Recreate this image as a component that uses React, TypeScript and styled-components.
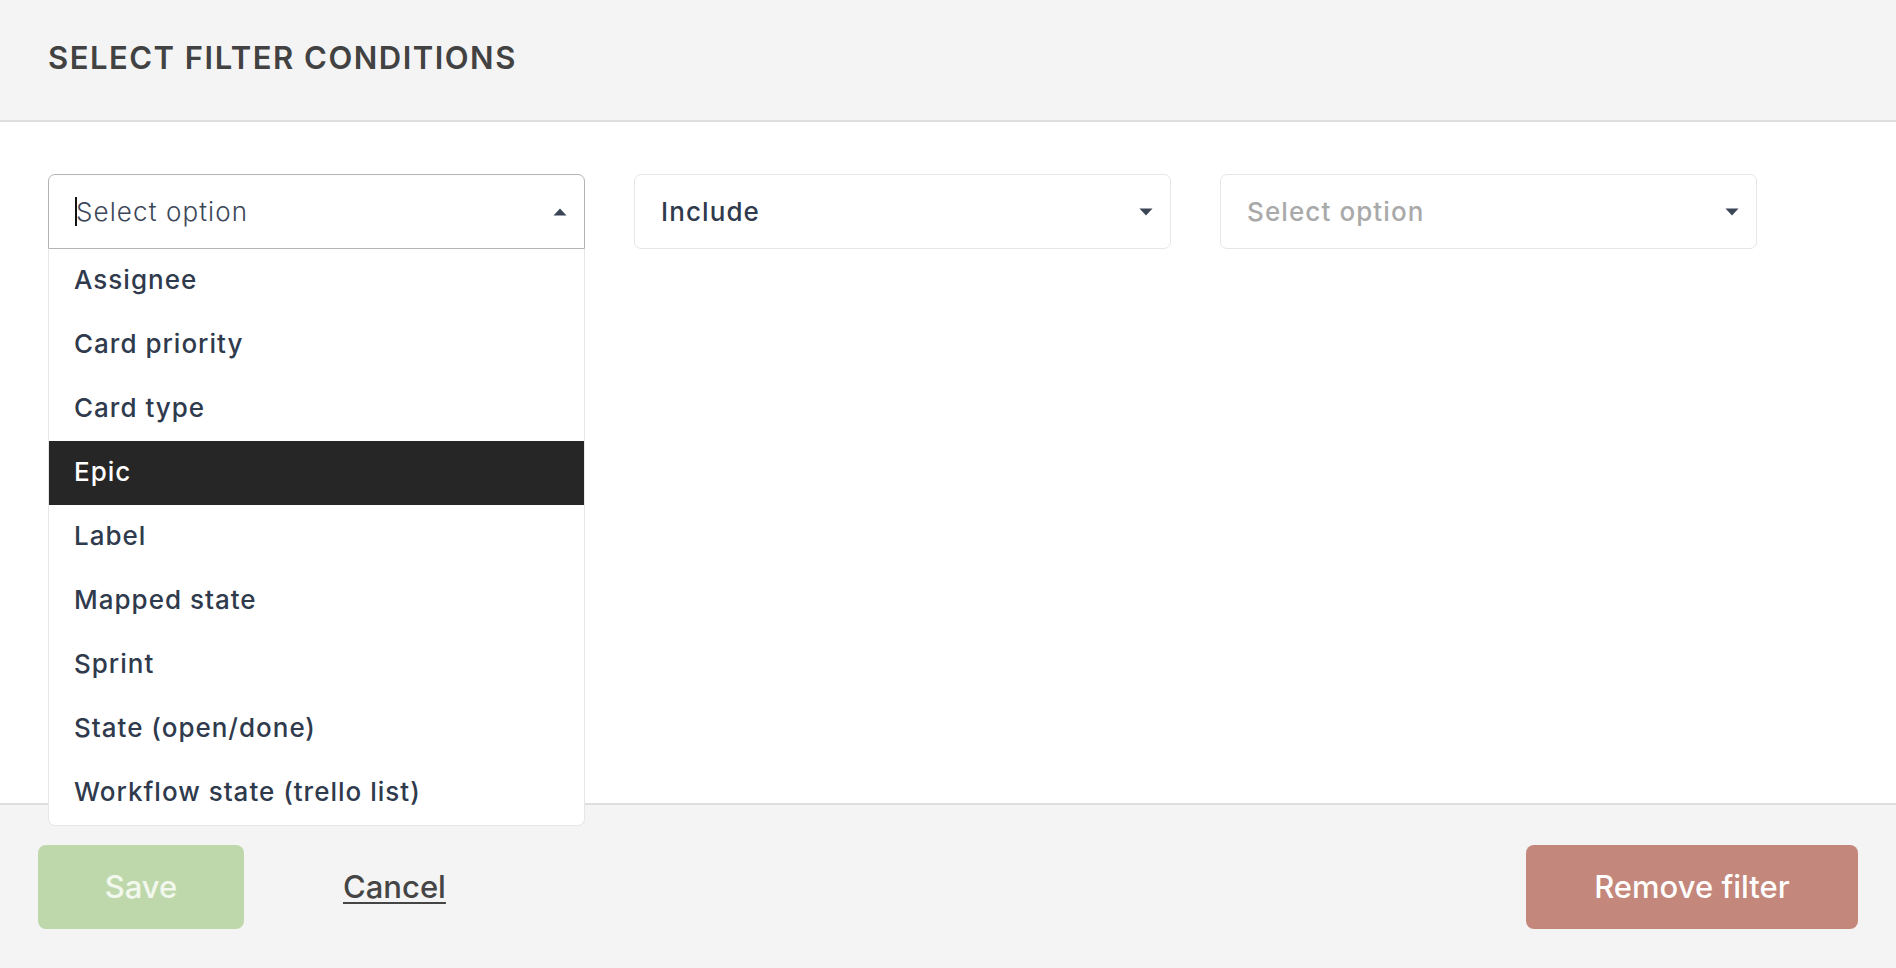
import React from "react";
import styled, { createGlobalStyle } from "styled-components";

const Global = createGlobalStyle`
  * { box-sizing: border-box; }
  html, body { margin: 0; padding: 0; background: #ffffff; }
  body { font-family: Inter, "Noto Sans", sans-serif; }
`;

const Page = styled.div`
  width: 1896px;
  height: 968px;
  display: flex;
  flex-direction: column;
  background: #ffffff;
  overflow: hidden;
`;

const Header = styled.header`
  height: 122px;
  flex: none;
  display: flex;
  align-items: center;
  padding: 0 0 6px 48px;
  background: #f4f4f4;
  border-bottom: 2px solid #dedede;
`;

const Title = styled.h1`
  margin: 0;
  font-family: Inter, "Noto Sans", sans-serif;
  font-weight: 600;
  font-size: 31px;
  letter-spacing: 1.5px;
  color: #424242;
`;

const Body = styled.main`
  flex: 1;
  display: flex;
  align-items: flex-start;
  gap: 49px;
  padding: 52px 0 0 48px;
`;

const SelectWrap = styled.div`
  position: relative;
  width: 537px;
`;

const SelectBox = styled.div<{ $open?: boolean }>`
  height: 75px;
  display: flex;
  align-items: center;
  padding: 0 17px 0 26px;
  background: #ffffff;
  border: 1.5px solid ${(p) => (p.$open ? "#b4b4b4" : "#e6e6e6")};
  border-radius: ${(p) => (p.$open ? "7px 7px 0 0" : "7px")};
`;

const Value = styled.span<{ $tone: "typed" | "value" | "placeholder" }>`
  flex: 1;
  display: flex;
  align-items: center;
  font-size: 26px;
  letter-spacing: 1.1px;
  font-weight: ${(p) => (p.$tone === "typed" ? 300 : 500)};
  color: ${(p) =>
    p.$tone === "placeholder" ? "#a9a9a9" : p.$tone === "typed" ? "#3b4658" : "#2f3a4c"};
`;

const Cursor = styled.span`
  display: inline-block;
  width: 2px;
  height: 29px;
  background: #111;
  margin-right: -1px;
`;

const Caret = styled.svg`
  flex: none;
  width: 14px;
  height: 8px;
  fill: #3a4556;
`;

const Menu = styled.ul`
  position: absolute;
  z-index: 5;
  top: 75px;
  left: 0;
  width: 537px;
  margin: 0;
  padding: 0;
  list-style: none;
  background: #ffffff;
  border: 1.5px solid #e6e6e6;
  border-top: none;
  border-radius: 0 0 7px 7px;
`;

const Item = styled.li<{ $active?: boolean }>`
  height: 64px;
  display: flex;
  align-items: center;
  padding: 0 0 4px 25px;
  font-size: 26px;
  font-weight: 500;
  letter-spacing: 1px;
  color: ${(p) => (p.$active ? "#ffffff" : "#2f3a4d")};
  background: ${(p) => (p.$active ? "#262626" : "transparent")};
`;

const Footer = styled.footer`
  height: 165px;
  flex: none;
  display: flex;
  align-items: center;
  padding: 0 38px 0 38px;
  background: #f4f4f4;
  border-top: 2px solid #dedede;
`;

const Button = styled.button<{ $tone: "save" | "danger" }>`
  height: 84px;
  width: ${(p) => (p.$tone === "save" ? "206px" : "332px")};
  margin-left: ${(p) => (p.$tone === "danger" ? "auto" : "0")};
  border: none;
  border-radius: 8px;
  font-family: Inter, "Noto Sans", sans-serif;
  font-size: 31px;
  font-weight: 500;
  color: ${(p) => (p.$tone === "save" ? "#f3f8ef" : "#ffffff")};
  background: ${(p) => (p.$tone === "save" ? "#bfd8ab" : "#c4877b")};
`;

const LinkButton = styled.button`
  margin-left: 99px;
  padding: 0;
  border: none;
  background: none;
  font-family: Inter, "Noto Sans", sans-serif;
  font-size: 31px;
  font-weight: 500;
  color: #454545;
  text-decoration: underline;
  text-underline-offset: 4px;
  text-decoration-thickness: 2px;
`;

const Up = () => (
  <Caret viewBox="0 0 14 8">
    <path d="M7 0.5 L13.5 7.5 L0.5 7.5 Z" />
  </Caret>
);
const Down = () => (
  <Caret viewBox="0 0 14 8">
    <path d="M0.5 0.5 L13.5 0.5 L7 7.5 Z" />
  </Caret>
);

const options = [
  "Assignee",
  "Card priority",
  "Card type",
  "Epic",
  "Label",
  "Mapped state",
  "Sprint",
  "State (open/done)",
  "Workflow state (trello list)",
];

export default function App() {
  return (
    <Page>
      <Global />
      <Header>
        <Title>SELECT FILTER CONDITIONS</Title>
      </Header>
      <Body>
        <SelectWrap>
          <SelectBox $open>
            <Value $tone="typed">
              <Cursor />
              Select option
            </Value>
            <Up />
          </SelectBox>
          <Menu>
            {options.map((o) => (
              <Item key={o} $active={o === "Epic"}>
                {o}
              </Item>
            ))}
          </Menu>
        </SelectWrap>
        <SelectWrap>
          <SelectBox>
            <Value $tone="value">Include</Value>
            <Down />
          </SelectBox>
        </SelectWrap>
        <SelectWrap>
          <SelectBox>
            <Value $tone="placeholder">Select option</Value>
            <Down />
          </SelectBox>
        </SelectWrap>
      </Body>
      <Footer>
        <Button $tone="save">Save</Button>
        <LinkButton>Cancel</LinkButton>
        <Button $tone="danger">Remove filter</Button>
      </Footer>
    </Page>
  );
}
